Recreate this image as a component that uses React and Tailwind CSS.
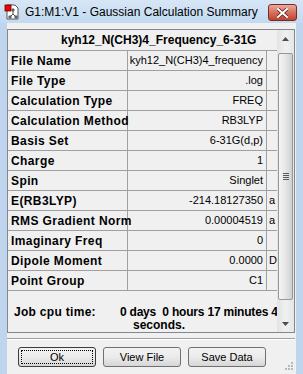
const rows = [
  ["File Name", "kyh12_N(CH3)4_frequency", ""],
  ["File Type", ".log", ""],
  ["Calculation Type", "FREQ", ""],
  ["Calculation Method", "RB3LYP", ""],
  ["Basis Set", "6-31G(d,p)", ""],
  ["Charge", "1", ""],
  ["Spin", "Singlet", ""],
  ["E(RB3LYP)", "-214.18127350", "a"],
  ["RMS Gradient Norm", "0.00004519", "a"],
  ["Imaginary Freq", "0", ""],
  ["Dipole Moment", "0.0000", "D"],
  ["Point Group", "C1", ""],
];

function AppIcon() {
  return (
    <svg width="16" height="16" viewBox="0 0 16 16">
      <path d="M3 1h8l3 3v11H3z" fill="#fff" stroke="#555" strokeWidth="1" />
      <rect x="1" y="1" width="6" height="6" fill="#e00" stroke="#600" strokeWidth="0.8" />
      <g stroke="#555" strokeWidth="1" fill="#777">
        <line x1="9" y1="6" x2="9" y2="10" />
        <line x1="9" y1="10" x2="6" y2="13" />
        <line x1="9" y1="10" x2="12" y2="13" />
        <circle cx="9" cy="6" r="1.2" />
        <circle cx="6" cy="13" r="1.2" />
        <circle cx="12" cy="13" r="1.2" />
      </g>
    </svg>
  );
}

function Arrow({ up }) {
  return (
    <svg width="7" height="4" viewBox="0 0 7 4">
      <path d={up ? "M0 4L3.5 0L7 4z" : "M0 0L3.5 4L7 0z"} fill="#4d4d4d" />
    </svg>
  );
}

function Button({ children, focused }) {
  return (
    <div
      className={`relative flex h-[20px] w-[78px] items-center justify-center rounded-[3px] border bg-gradient-to-b from-[#f2f2f2] via-[#ebebeb] to-[#d6d6d6] text-[11px] text-black ${
        focused ? "border-[#3c3c3c]" : "border-[#707070]"
      }`}
    >
      {focused && <div className="absolute inset-[2px] border border-dotted border-black" />}
      {children}
    </div>
  );
}

export default function App() {
  return (
    <div
      className="relative flex h-[374px] w-[303px] flex-col overflow-hidden bg-[#bfd5ee]"
      style={{ fontFamily: '"Liberation Sans", Arial, sans-serif' }}
    >
      <div className="flex h-[23px] shrink-0 items-center bg-gradient-to-b from-[#d7e6f6] to-[#c3d9f0] pl-[4px]">
        <AppIcon />
        <span className="ml-[5px] text-[12px] text-black">G1:M1:V1 - Gaussian Calculation Summary</span>
        <div className="ml-auto mr-[6px] mt-[2px] flex h-[17px] w-[29px] items-center justify-center rounded-[3px] border border-[#7b2c22] bg-gradient-to-b from-[#e9a99b] via-[#d5715f] to-[#c2412e]">
          <svg width="11" height="10" viewBox="0 0 11 10">
            <path d="M1 1L10 9M10 1L1 9" stroke="#5a1a12" strokeWidth="3.4" strokeLinecap="square" />
            <path d="M1 1L10 9M10 1L1 9" stroke="#fff" strokeWidth="2" strokeLinecap="square" />
          </svg>
        </div>
      </div>

      <div className="relative mx-[7px] flex flex-1 flex-col bg-[#f0f0f0]">
        <div className="mr-[1px] mt-[6px] flex h-[304px] border border-[#828790]">
          <div className="flex w-[270px] flex-col overflow-hidden">
            <div className="flex h-[21px] shrink-0 items-center border-b border-[#a0a0a0] pl-[53px] text-[12px] font-bold whitespace-nowrap text-black">
              kyh12_N(CH3)4_Frequency_6-31G
            </div>
            {rows.map(([label, value, unit]) => (
              <div key={label} className="grid h-[20px] shrink-0 grid-cols-[120px_139px_11px] border-b border-[#a0a0a0]">
                <div className="flex items-center border-r border-[#a0a0a0] pl-[3px] text-[12px] font-bold tracking-[0.4px] whitespace-nowrap text-black">
                  {label}
                </div>
                <div className="flex items-center justify-end border-r border-[#a0a0a0] pr-[3px] text-[11px] whitespace-nowrap text-black">
                  {value}
                </div>
                <div className="flex items-center overflow-hidden border-r border-[#a0a0a0] pl-[2px] text-[11px] text-black">
                  {unit}
                </div>
              </div>
            ))}
            <div className="mt-[15px] flex text-[12px] leading-[13px] font-bold whitespace-nowrap text-black">
              <span className="pl-[6px] tracking-[0.3px]">Job cpu time:</span>
              <span className="ml-[24px] tracking-[-0.2px]">0 days&nbsp;&nbsp;0 hours&nbsp;17 minutes 4</span>
            </div>
            <div className="pl-[125px] text-[12px] leading-[13px] font-bold text-black">seconds.</div>
          </div>

          <div className="flex w-[17px] flex-col bg-gradient-to-r from-[#e3e3e3] via-[#f0f0f0] to-[#e6e6e6]">
            <div className="flex h-[17px] items-center justify-center">
              <Arrow up />
            </div>
            <div className="mx-[1px] mt-[6px] flex h-[247px] items-center justify-center rounded-[2px] border border-[#979797] bg-gradient-to-r from-[#f5f5f5] via-[#e6e6e6] to-[#cfcfcf]">
              <div className="flex flex-col gap-[1px]">
                <div className="h-px w-[6px] bg-[#5a5a5a]" />
                <div className="h-px w-[6px] bg-[#5a5a5a]" />
                <div className="h-px w-[6px] bg-[#5a5a5a]" />
                <div className="h-px w-[6px] bg-[#5a5a5a]" />
              </div>
            </div>
            <div className="mt-auto flex h-[17px] items-center justify-center">
              <Arrow />
            </div>
          </div>
        </div>

        <div className="mt-[5px] mr-[1px] border-t border-b border-t-[#a0a0a0] border-b-white" />

        <div className="mt-[7px] flex gap-[7px] pl-[11px]">
          <Button focused>Ok</Button>
          <Button>View File</Button>
          <Button>Save Data</Button>
        </div>

        <div className="absolute right-[3px] bottom-[4px] grid grid-cols-3 gap-[1px]">
          <div />
          <div />
          <div className="h-[2px] w-[2px] bg-[#b8b8b8]" />
          <div />
          <div className="h-[2px] w-[2px] bg-[#b8b8b8]" />
          <div className="h-[2px] w-[2px] bg-[#b8b8b8]" />
          <div className="h-[2px] w-[2px] bg-[#b8b8b8]" />
          <div className="h-[2px] w-[2px] bg-[#b8b8b8]" />
          <div className="h-[2px] w-[2px] bg-[#b8b8b8]" />
        </div>
      </div>
    </div>
  );
}
